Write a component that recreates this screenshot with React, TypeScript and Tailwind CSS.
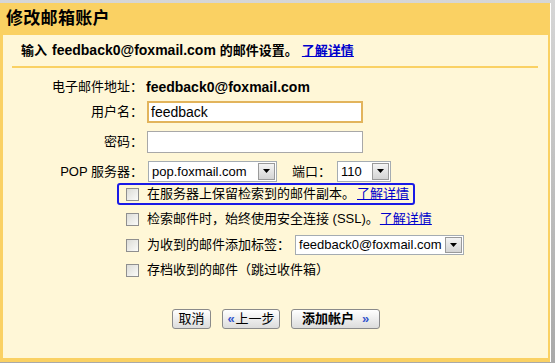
import React from "react";

const font = { fontFamily: '"Liberation Sans", Arial, "Noto Sans CJK SC", sans-serif' };

function Checkbox() {
  return (
    <span className="inline-block w-[13px] h-[13px] border border-[#8f8f8f] bg-gradient-to-br from-[#dcdcd7] to-[#fbfbf9] shrink-0" />
  );
}

function DropButton() {
  return (
    <span className="flex items-center justify-center w-[17px] h-full border border-[#9a9a9a] bg-gradient-to-b from-[#f4f4f4] to-[#d4d4d4]">
      <svg width="9" height="5" viewBox="0 0 9 5">
        <path d="M1 0h7L4.5 4z" fill="#000" />
      </svg>
    </span>
  );
}

function Select({ value, width, height }: { value: string; width: string; height: string }) {
  return (
    <div className={`flex items-center bg-white border border-[#a5acb2] p-px ${width} ${height}`}>
      <span className="flex-1 pl-[2px] text-[13px] text-black whitespace-nowrap overflow-hidden">
        {value}
      </span>
      <DropButton />
    </div>
  );
}

function Btn({ children, width }: { children: React.ReactNode; width: string }) {
  return (
    <button
      className={`h-[20px] ${width} flex items-center justify-center rounded-[3px] border border-[#8a8a8a] bg-gradient-to-b from-[#ffffff] to-[#dcdcdc] text-[13px] text-black`}
    >
      {children}
    </button>
  );
}

export default function App() {
  return (
    <div
      className="relative w-[555px] h-[363px] bg-gradient-to-b from-[#d6d6d6] to-[#a9a9a9] overflow-hidden"
      style={font}
    >
      <div className="mt-[3px] w-[551px] h-[359px] bg-[#fad163] border-r border-white flex flex-col">
        {/* title */}
        <div className="h-[32px] flex items-center pl-[6px]">
          <h1 className="text-[17px] font-bold text-black tracking-[0.3px]">修改邮箱账户</h1>
        </div>

        {/* panel */}
        <div className="mx-[3px] w-[545px] h-[323px] bg-[#fff7d7] flex flex-col text-[13px] text-black">
          <div className="h-[31px] flex items-center pl-[18px] font-bold whitespace-nowrap">
            <span>输入</span>
            <span className="ml-[5px] text-[14px]">feedback0@foxmail.com</span>
            <span className="ml-[4px]">的邮件设置。</span>
            <a className="ml-[4px] text-[#0000cc] underline">了解详情</a>
          </div>
          <div className="ml-[9px] w-[526px] h-[2px] bg-[#fad163]" />

          {/* email */}
          <div className="mt-[9px] h-[20px] flex items-center">
            <span className="w-[140px] text-right">电子邮件地址：</span>
            <span className="ml-[3px] font-bold text-[14px]">feedback0@foxmail.com</span>
          </div>

          {/* username */}
          <div className="mt-[4px] h-[22px] flex items-center">
            <span className="w-[140px] text-right">用户名：</span>
            <div className="ml-[4px] w-[216px] h-[22px] bg-white border-2 border-[#e2b45c] flex items-center pl-[2px] text-[14px]">
              feedback
            </div>
          </div>

          {/* password */}
          <div className="mt-[8px] h-[22px] flex items-center">
            <span className="w-[140px] text-right">密码：</span>
            <div className="ml-[4px] w-[216px] h-[22px] bg-white border border-[#a8a8a8]" />
          </div>

          {/* pop */}
          <div className="mt-[8px] h-[21px] flex items-center">
            <span className="w-[140px] text-right">POP 服务器：</span>
            <div className="ml-[5px]">
              <Select value="pop.foxmail.com" width="w-[129px]" height="h-[21px]" />
            </div>
            <span className="ml-[15px]">端口：</span>
            <div className="ml-[6px]">
              <Select value="110" width="w-[54px]" height="h-[21px]" />
            </div>
          </div>

          {/* checkbox 1 */}
          <div className="mt-[1px] ml-[114px] w-[298px] h-[22px] border-2 border-[#1a1ae6] rounded-[3px] flex items-center pl-[7px] whitespace-nowrap">
            <Checkbox />
            <span className="ml-[8px]">在服务器上保留检索到的邮件副本。</span>
            <a className="ml-[2px] text-[#0000cc] underline">了解详情</a>
          </div>

          {/* checkbox 2 */}
          <div className="mt-[3px] ml-[123px] h-[22px] flex items-center whitespace-nowrap">
            <Checkbox />
            <span className="ml-[8px]">检索邮件时，始终使用安全连接 (SSL)。</span>
            <a className="ml-[1px] text-[#0000cc] underline">了解详情</a>
          </div>

          {/* checkbox 3 */}
          <div className="mt-[4px] ml-[123px] h-[22px] flex items-center whitespace-nowrap">
            <Checkbox />
            <span className="ml-[8px]">为收到的邮件添加标签：</span>
            <div className="ml-[5px]">
              <Select value="feedback0@foxmail.com" width="w-[169px]" height="h-[20px]" />
            </div>
          </div>

          {/* checkbox 4 */}
          <div className="mt-[3px] ml-[123px] h-[22px] flex items-center whitespace-nowrap">
            <Checkbox />
            <span className="ml-[8px]">存档收到的邮件（跳过收件箱）</span>
          </div>

          {/* buttons */}
          <div className="mt-[28px] ml-[169px] flex items-center gap-[11px]">
            <Btn width="w-[39px]">取消</Btn>
            <Btn width="w-[58px]">
              <span className="text-[#3355cc] font-bold mr-[1px]">«</span>上一步
            </Btn>
            <Btn width="w-[89px]">
              <span className="font-bold">添加帐户</span>
              <span className="ml-[8px] text-[#3355cc] font-bold">»</span>
            </Btn>
          </div>
        </div>
      </div>
    </div>
  );
}
